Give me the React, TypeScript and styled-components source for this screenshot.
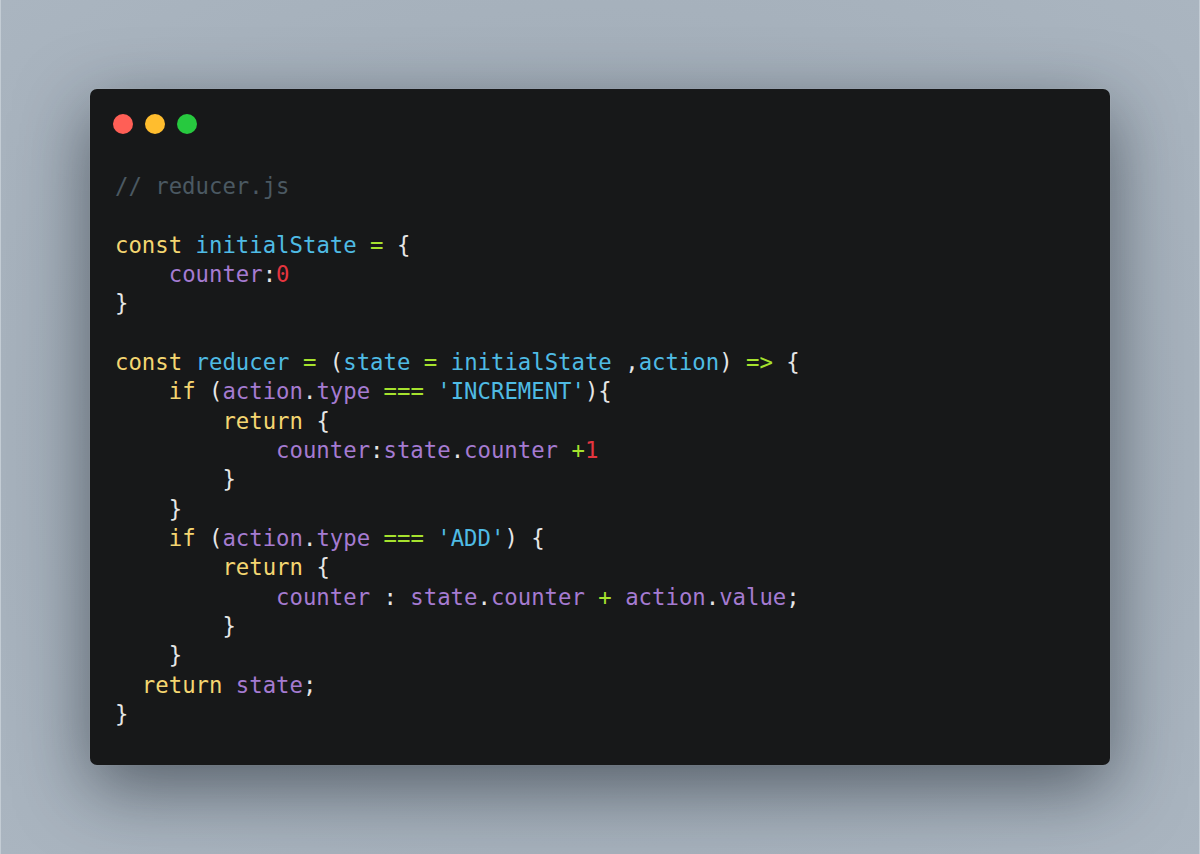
import React from "react";
import styled, { createGlobalStyle } from "styled-components";

const GlobalStyle = createGlobalStyle`
  html, body { margin: 0; padding: 0; }
  body { background: #a9b4bf; }
`;

const Page = styled.div`
  width: 1200px;
  height: 854px;
  box-sizing: border-box;
  display: flex;
  align-items: center;
  justify-content: center;
  background: radial-gradient(ellipse at center, #8e99a3 0%, #a4afba 55%, #aab5c0 100%);
  border-left: 1px solid #c3ccd4;
  border-right: 1px solid #c3ccd4;
`;

const Window = styled.div`
  width: 1020px;
  height: 676px;
  box-sizing: border-box;
  background: #171819;
  border-radius: 7px;
  box-shadow: 0 22px 70px rgba(20, 28, 36, 0.55), 0 0 0 1px rgba(255,255,255,0.06);
  padding: 25px 26px 36px 23px;
  display: flex;
  flex-direction: column;
`;

const Dots = styled.div`
  display: flex;
  gap: 12px;
`;

const Dot = styled.span<{ $c: string }>`
  width: 20px;
  height: 20px;
  border-radius: 50%;
  background: ${(p) => p.$c};
`;

const Code = styled.pre`
  margin: 38px 0 0 2px;
  font-family: "DejaVu Sans Mono", monospace;
  font-size: 22.3px;
  line-height: 29.33px;
  color: #e6e6e6;
  white-space: pre;
`;

const Line = styled.div`
  height: 29.33px;
`;

type Tok = "k" | "v" | "p" | "o" | "n" | "w" | "c" | "s";
const colors: Record<Tok, string> = {
  k: "#f4d671",
  v: "#4fbbe4",
  p: "#a57bd1",
  o: "#a6e22e",
  n: "#e5353f",
  w: "#e6e6e6",
  c: "#4b5962",
  s: "#4fbbe4",
};

const T = styled.span<{ $t: Tok }>`
  color: ${(p) => colors[p.$t]};
`;

const lines: [Tok, string][][] = [
  [["c", "// reducer.js"]],
  [],
  [["k", "const"], ["w", " "], ["v", "initialState"], ["w", " "], ["o", "="], ["w", " {"]],
  [["w", "    "], ["p", "counter"], ["w", ":"], ["n", "0"]],
  [["w", "}"]],
  [],
  [
    ["k", "const"], ["w", " "], ["v", "reducer"], ["w", " "], ["o", "="], ["w", " ("],
    ["v", "state"], ["w", " "], ["o", "="], ["w", " "], ["v", "initialState"], ["w", " ,"],
    ["v", "action"], ["w", ") "], ["o", "=>"], ["w", " {"],
  ],
  [
    ["w", "    "], ["k", "if"], ["w", " ("], ["p", "action"], ["w", "."], ["p", "type"], ["w", " "],
    ["o", "==="], ["w", " "], ["s", "'INCREMENT'"], ["w", "){"],
  ],
  [["w", "        "], ["k", "return"], ["w", " {"]],
  [
    ["w", "            "], ["p", "counter"], ["w", ":"], ["p", "state"], ["w", "."], ["p", "counter"],
    ["w", " "], ["o", "+"], ["n", "1"],
  ],
  [["w", "        }"]],
  [["w", "    }"]],
  [
    ["w", "    "], ["k", "if"], ["w", " ("], ["p", "action"], ["w", "."], ["p", "type"], ["w", " "],
    ["o", "==="], ["w", " "], ["s", "'ADD'"], ["w", ") {"],
  ],
  [["w", "        "], ["k", "return"], ["w", " {"]],
  [
    ["w", "            "], ["p", "counter"], ["w", " : "], ["p", "state"], ["w", "."], ["p", "counter"],
    ["w", " "], ["o", "+"], ["w", " "], ["p", "action"], ["w", "."], ["p", "value"], ["w", ";"],
  ],
  [["w", "        }"]],
  [["w", "    }"]],
  [["w", "  "], ["k", "return"], ["w", " "], ["p", "state"], ["w", ";"]],
  [["w", "}"]],
];

export default function App() {
  return (
    <>
      <GlobalStyle />
      <Page>
        <Window>
          <Dots>
            <Dot $c="#ff5f56" />
            <Dot $c="#ffbd2e" />
            <Dot $c="#27c93f" />
          </Dots>
          <Code>
            {lines.map((l, i) => (
              <Line key={i}>
                {l.map(([t, s], j) => (
                  <T key={j} $t={t}>
                    {s}
                  </T>
                ))}
              </Line>
            ))}
          </Code>
        </Window>
      </Page>
    </>
  );
}
